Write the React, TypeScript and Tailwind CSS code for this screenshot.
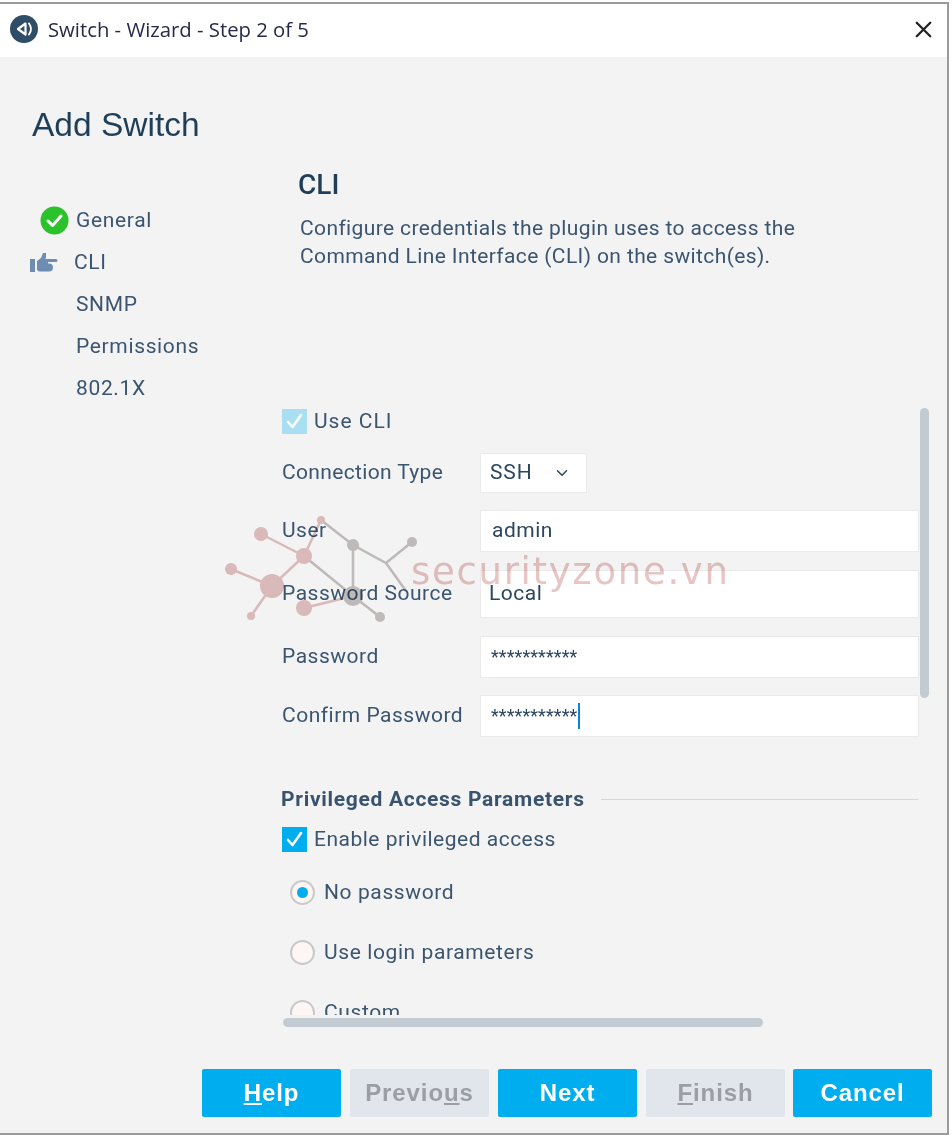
import { ChevronDown, X } from 'lucide-react';

const steps = ['SNMP', 'Permissions', '802.1X'];

function Field({ label, value, pl = 'pl-[11px]', mb = 'mb-5', h = 'h-10', text = 'text-[21px] tracking-[0.5px]' }: { label: string; value: React.ReactNode; pl?: string; mb?: string; h?: string; text?: string }) {
  return (
    <div className={`flex items-center ${mb}`}>
      <span className="w-[199px] shrink-0 text-[21px] leading-none tracking-[0.5px] text-[#3b5570]">{label}</span>
      <div className={`flex w-[437px] ${h} items-center bg-white ${pl} ${text} text-[#2c4660] shadow-[0_0_0_1px_#eaeaea]`}>{value}</div>
    </div>
  );
}

function Radio({ label, on }: { label: string; on?: boolean }) {
  return (
    <div className="flex h-[60px] items-center pl-2">
      <span className="flex h-[25px] w-[25px] items-center justify-center rounded-full border-2 border-[#c9c9c9] bg-[#fdf6f5]">
        {on && <span className="h-[11px] w-[11px] rounded-full bg-[#00aeef]" />}
      </span>
      <span className="ml-[9px] text-[21px] tracking-[0.6px] text-[#3b5570]">{label}</span>
    </div>
  );
}

function Btn({ children, off, className = '' }: { children: React.ReactNode; off?: boolean; className?: string }) {
  return (
    <button className={`h-[48px] w-[139px] rounded-[2px] text-center font-['Liberation_Sans',sans-serif] text-[24px] font-bold tracking-[0.9px] ${off ? 'bg-[#e1e5ec] text-[#9b9ea3]' : 'bg-[#00aeef] text-white'} ${className}`}>
      {children}
    </button>
  );
}

function Check({ color }: { color: string }) {
  return (
    <span className="flex h-[25px] w-[25px] items-center justify-center" style={{ background: color }}>
      <svg width="21" height="21" viewBox="0 0 21 21" fill="none" stroke="#fff" strokeWidth="2.6" strokeLinecap="round" strokeLinejoin="round">
        <path d="M4 11l4.5 5L17 4" />
      </svg>
    </span>
  );
}

function Watermark() {
  const pink = '#e4c2c2';
  const gray = '#c8c3c3';
  return (
    <div className="pointer-events-none absolute left-[222px] top-[510px] mix-blend-multiply">
      <svg width="200" height="115" viewBox="222 510 200 115" className="block">
        <g stroke={pink} strokeWidth="2.5" fill="none">
          <path d="M261 534L304 556M304 556L272 586M231 569L272 586M272 586L251 616M304 608L353 596M304 556L321 520" />
        </g>
        <g stroke={gray} strokeWidth="2.5" fill="none">
          <path d="M321 520L353 545L386 563L412 542M386 563L406 591M353 545V596M304 556L353 596L380 617" />
        </g>
        <g fill={pink}>
          <circle cx="261" cy="534" r="7" />
          <circle cx="304" cy="556" r="8" />
          <circle cx="321" cy="520" r="4" />
          <circle cx="231" cy="569" r="6" />
          <circle cx="272" cy="586" r="12" />
          <circle cx="304" cy="608" r="8" />
          <circle cx="251" cy="616" r="4" />
        </g>
        <g fill={gray}>
          <circle cx="353" cy="545" r="6" />
          <circle cx="412" cy="542" r="5" />
          <circle cx="353" cy="596" r="10" />
          <circle cx="380" cy="617" r="5" />
        </g>
      </svg>
    </div>
  );
}

export default function App() {
  return (
    <div className="relative h-[1136px] w-[952px] overflow-hidden bg-white font-['Roboto',sans-serif]">
      <div className="mt-[2px] flex h-[1133px] w-[949px] flex-col border-b-2 border-r-2 border-t-2 border-[#9b9b9b]">
        {/* title bar */}
        <div className="flex h-[53px] shrink-0 items-center bg-white pb-[3px] pl-[10px] pr-[10px]">
          <svg width="28" height="28" viewBox="0 0 28 28">
            <circle cx="14" cy="14" r="14" fill="#2f4d66" />
            <path d="M15.5 8.5L8 14l7.5 5.5z" fill="none" stroke="#fff" strokeWidth="2.2" strokeLinejoin="round" />
            <path d="M19 8.5a9 9 0 010 11" fill="none" stroke="#fff" strokeWidth="2" strokeLinecap="round" />
          </svg>
          <span className="ml-[10px] font-['Open_Sans',sans-serif] text-[20.3px] text-[#262a4a]">Switch - Wizard - Step 2 of 5</span>
          <X className="ml-auto text-[#222]" size={27} strokeWidth={2} />
        </div>

        <div className="flex min-h-0 flex-1 flex-col bg-[#f3f3f3]">
          <h1 className="mt-[48px] pl-[32px] font-['Liberation_Sans',sans-serif] text-[33.5px] leading-[40px] text-[#1f3e58]">Add Switch</h1>

          <div className="flex min-h-0 flex-1">
            {/* steps */}
            <div className="mt-[55px] w-[282px] shrink-0 text-[21px] tracking-[0.65px] text-[#3b5570]">
              <div className="flex h-[42px] items-center pl-[40px]">
                <svg width="29" height="29" viewBox="0 0 29 29" className="-mt-[2px]">
                  <circle cx="14.5" cy="14.5" r="14" fill="#2cc22c" />
                  <path d="M8 15l4.5 4.5L21 10" fill="none" stroke="#fff" strokeWidth="3" strokeLinecap="round" strokeLinejoin="round" />
                </svg>
                <span className="ml-[7px]">General</span>
              </div>
              <div className="flex h-[42px] items-center pl-[30px]">
                <svg width="28" height="20" viewBox="0 0 28 20" fill="#6f8db0">
                  <rect x="0" y="6" width="5" height="13" />
                  <path d="M7 8l4-3 2-5h3v5l-1 1h11a1.5 1.5 0 010 3H18v1.5h1a1.5 1.5 0 010 8H9l-2-1.5z" />
                </svg>
                <span className="ml-[16px]">CLI</span>
              </div>
              {steps.map(s => (
                <div key={s} className="flex h-[42px] items-center pl-[76px]">{s}</div>
              ))}
            </div>

            {/* main */}
            <div className="flex min-w-0 flex-1 flex-col">
              <h2 className="mt-[24px] pl-[16px] text-[28px] font-medium leading-8 text-[#1f3e58]">CLI</h2>
              <p className="mt-[13px] h-[192px] pl-[18px] text-[21px] leading-[28px] tracking-[0.38px] text-[#3b5570]">
                Configure credentials the plugin uses to access the
                <br />
                Command Line Interface (CLI) on the switch(es).
              </p>

              <div className="h-[609px] shrink-0 overflow-hidden">
                <div className="flex items-center">
                  <Check color="#a9def3" />
                  <span className="ml-[7px] text-[21px] tracking-[1px] text-[#3b5570]">Use CLI</span>
                </div>
                <div className="mb-[19px] mt-[16px] flex items-center">
                  <span className="w-[199px] shrink-0 text-[21px] tracking-[0.35px] text-[#3b5570]">Connection Type</span>
                  <div className="flex h-[38px] w-[105px] items-center bg-white pl-[9px] text-[21px] tracking-[0.9px] text-[#2c4660] shadow-[0_0_0_1px_#eaeaea]">
                    SSH
                    <ChevronDown className="ml-[20px]" size={18} strokeWidth={2} />
                  </div>
                </div>
                <Field label="User" value="admin" />
                <Field label="Password Source" value="Local" pl="pl-[8px]" h="h-[46px]" />
                <Field label="Password" value="***********" pl="pl-[10px]" mb="mb-[19px]" text="text-[18px] tracking-[0.1px]" />
                <Field
                  label="Confirm Password"
                  value={
                    <>
                      ***********
                      <span className="ml-[1px] h-[26px] w-[2px] bg-[#0a84d8]" />
                    </>
                  }
                  pl="pl-[10px]"
                  mb="mb-[48px]"
                  text="text-[18px] tracking-[0.1px]"
                />
                <div className="-ml-px flex items-center">
                  <span className="text-[21px] font-bold tracking-[0.7px] text-[#38536e]">Privileged Access Parameters</span>
                  <span className="ml-[16px] h-[1px] w-[317px] bg-[#bcdfee]" />
                </div>
                <div className="mt-[9px] flex items-center">
                  <Check color="#00aeef" />
                  <span className="ml-[7px] text-[21px] tracking-[0.5px] text-[#3b5570]">Enable privileged access</span>
                </div>
                <div className="mt-[7px]">
                  <Radio label="No password" on />
                  <Radio label="Use login parameters" />
                  <Radio label="Custom" />
                </div>
              </div>
            </div>
          </div>

          {/* footer buttons */}
          <div className="flex h-[113px] shrink-0 items-start justify-end gap-[9px] pr-[15px] pt-[49px]">
            <Btn><span className="underline">H</span>elp</Btn>
            <Btn off>Previo<span className="underline">u</span>s</Btn>
            <Btn>Next</Btn>
            <Btn off><span className="underline">F</span>inish</Btn>
            <Btn className="-ml-px">Cancel</Btn>
          </div>
        </div>
      </div>

      {/* scrollbars sit on top of the form */}
      <div className="absolute left-[920px] top-[408px] h-[290px] w-[9px] rounded-full bg-[#c1cbd1]" />
      <div className="absolute left-[283px] top-[1018px] h-[9px] w-[480px] rounded-full bg-[#c1cbd1]" />

      <Watermark />
      <span className="pointer-events-none absolute left-[411px] top-[550px] font-['DejaVu_Sans',sans-serif] text-[37px] leading-[44px] tracking-[1.7px] text-[#e3b5b5] opacity-80 mix-blend-multiply">
        securityzone.vn
      </span>
    </div>
  );
}
